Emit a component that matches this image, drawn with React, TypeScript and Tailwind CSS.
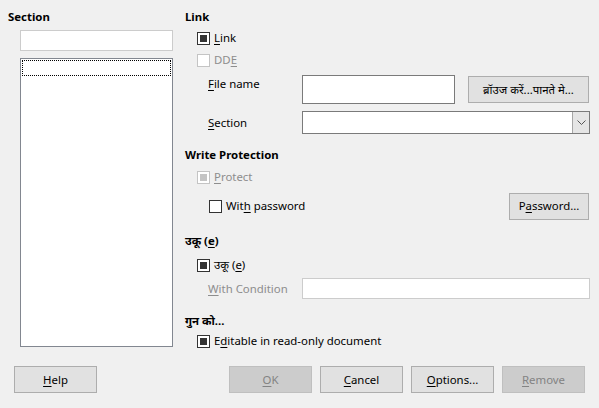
import React from 'react';

const font = "font-['Segoe_UI','Noto_Sans','Open_Sans',sans-serif]";

type BoxState = 'checked' | 'unchecked';

const CheckBox = ({ state, disabled }: { state: BoxState; disabled?: boolean }) => (
  <span
    className={`flex h-[13px] w-[13px] shrink-0 items-center justify-center border bg-white ${
      disabled ? 'border-[#c4c4c4]' : 'border-[#333333]'
    }`}
  >
    {state === 'checked' && (
      <span className={`h-[7px] w-[7px] ${disabled ? 'bg-[#c4c4c4]' : 'bg-[#333333]'}`} />
    )}
  </span>
);

// label with one underlined mnemonic letter
const Mn = ({ pre, u, post }: { pre?: string; u: string; post?: string }) => (
  <>
    {pre}
    <span className="underline underline-offset-2 decoration-1">{u}</span>
    {post}
  </>
);

const CheckRow = ({
  state,
  disabled,
  children,
  className = '',
}: {
  state: BoxState;
  disabled?: boolean;
  children: React.ReactNode;
  className?: string;
}) => (
  <div className={`flex h-[16px] items-center gap-[4px] ${className}`}>
    <CheckBox state={state} disabled={disabled} />
    <span className={disabled ? 'text-[#8d8d8d]' : 'text-black'}>{children}</span>
  </div>
);

const Button = ({
  children,
  disabled,
  className = '',
}: {
  children: React.ReactNode;
  disabled?: boolean;
  className?: string;
}) => (
  <div
    className={`flex h-[27px] items-center justify-center border ${
      disabled
        ? 'border-[#bfbfbf] bg-[#cccccc] text-[#838383]'
        : 'border-[#adadad] bg-[#e1e1e1] text-black'
    } ${className}`}
  >
    {children}
  </div>
);

export default function App() {
  return (
    <div className={`flex h-[408px] w-[599px] flex-col bg-[#f0f0f0] text-[11.4px] leading-[16px] ${font}`}>
      <div className="flex h-[366px]">
        {/* left: section list */}
        <div className="flex w-[177px] flex-col pl-[8px] pt-[9px]">
          <div className="font-bold">Section</div>
          <div className="ml-[12px] mt-[5px] h-[21px] w-[153px] border border-[#cccccc] bg-white" />
          <div className="ml-[12px] mt-[7px] h-[289px] w-[153px] border border-[#828790] bg-white p-px">
            <div className="h-[16px] border border-dotted border-black" />
          </div>
        </div>

        {/* right: options */}
        <div className="ml-[8px] flex w-[405px] flex-col pt-[9px]">
          <div className="font-bold">Link</div>
          <CheckRow state="checked" className="ml-[12px] mt-[5px]">
            <Mn u="L" post="ink" />
          </CheckRow>
          <CheckRow state="unchecked" disabled className="ml-[12px] mt-[6px]">
            <Mn pre="DD" u="E" />
          </CheckRow>

          <div className="mt-[7px] flex items-start">
            <div className="ml-[23px] w-[94px] pt-[1px]">
              <Mn u="F" post="ile name" />
            </div>
            <div className="h-[29px] w-[153px] border border-[#7a7a7a] bg-white" />
            <Button className="ml-[13px] mt-px w-[121px]">ब्रॉउज करें...पानते मे...</Button>
          </div>

          <div className="mt-[7px] flex items-center">
            <div className="ml-[23px] w-[94px]">
              <Mn u="S" post="ection" />
            </div>
            <div className="flex h-[23px] w-[288px] border border-[#7a7a7a] bg-white">
              <div className="flex-1" />
              <div className="flex w-[17px] items-center justify-center border-l border-[#a6a6a6] bg-[#e5e5e5]">
                <svg width="9" height="5" viewBox="0 0 9 5">
                  <path d="M0.5 0.5 L4.5 4.5 L8.5 0.5" fill="none" stroke="#555" strokeWidth="1" />
                </svg>
              </div>
            </div>
          </div>

          <div className="mt-[13px] font-bold">Write Protection</div>
          <CheckRow state="checked" disabled className="ml-[12px] mt-[6px]">
            <Mn u="P" post="rotect" />
          </CheckRow>
          <div className="mt-[8px] flex h-[26px] items-center">
            <div className="ml-[24px] flex items-center gap-[4px]">
              <CheckBox state="unchecked" />
              <span>
                <Mn pre="Wit" u="h" post=" password" />
              </span>
            </div>
            <Button className="ml-auto mr-px h-[26px] w-[80px]">
              <Mn pre="P" u="a" post="ssword..." />
            </Button>
          </div>

          <div className="mt-[14px] font-bold">
            <Mn pre="उकू (" u="e" post=")" />
          </div>
          <CheckRow state="checked" className="ml-[12px] mt-[8px]">
            <Mn pre="उकू (" u="e" post=")" />
          </CheckRow>
          <div className="mt-[5px] flex items-center">
            <div className="ml-[23px] w-[94px] text-[#8d8d8d]">
              <Mn u="W" post="ith Condition" />
            </div>
            <div className="h-[21px] w-[288px] border border-[#cccccc] bg-white" />
          </div>

          <div className="mt-[14px] font-bold">गुन को...</div>
          <CheckRow state="checked" className="ml-[12px] mt-[4px]">
            <Mn pre="E" u="d" post="itable in read-only document" />
          </CheckRow>
        </div>
      </div>

      {/* footer buttons */}
      <div className="flex px-[14px]">
        <Button className="w-[83px]">
          <Mn u="H" post="elp" />
        </Button>
        <div className="ml-auto flex gap-[8px]">
          <Button disabled className="w-[83px]">
            <Mn u="O" post="K" />
          </Button>
          <Button className="w-[83px]">
            <Mn u="C" post="ancel" />
          </Button>
          <Button className="w-[83px]">
            <Mn u="O" post="ptions..." />
          </Button>
          <Button disabled className="w-[83px]">
            <Mn u="R" post="emove" />
          </Button>
        </div>
      </div>
    </div>
  );
}
